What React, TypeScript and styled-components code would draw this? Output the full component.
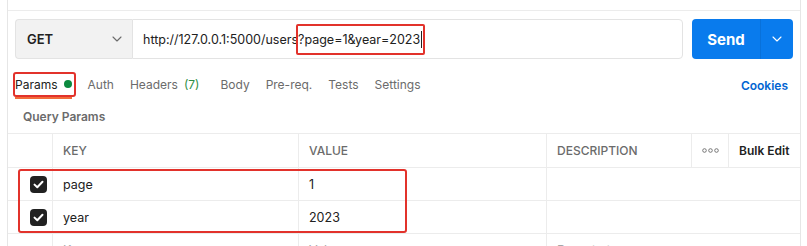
import * as React from "react";
import styled, { createGlobalStyle } from "styled-components";

const GlobalStyle = createGlobalStyle`
  html, body {
    margin: 0;
    padding: 0;
    background: #fff;
    overflow: hidden;
  }
  body {
    font-family: Inter, "Liberation Sans", sans-serif;
    color: #212121;
  }
`;

const Frame = styled.div`
  box-sizing: border-box;
  margin-left: 7px;
  width: 794px;
  height: 246px;
  overflow: hidden;
  padding-top: 10px;
  border-left: 1px solid #e6e6e6;
  border-right: 1px solid #e6e6e6;
`;

const Pane = styled.div`
  border-top: 1px solid #ececec;
`;

/* request bar */
const RequestBar = styled.div`
  display: flex;
  gap: 9px;
  padding: 8px 7px 0 7px;
  height: 40px;
`;

const UrlGroup = styled.div`
  flex: 1;
  display: flex;
`;

const MethodSelect = styled.div`
  box-sizing: border-box;
  width: 117px;
  display: flex;
  align-items: center;
  justify-content: space-between;
  padding: 0 10px 0 11px;
  background: #f2f2f2;
  border: 1px solid #e3e3e3;
  border-right: none;
  border-radius: 4px 0 0 4px;
  font-size: 13px;
  font-weight: 600;
  color: #212121;
`;

const UrlInput = styled.div`
  flex: 1;
  display: flex;
  align-items: center;
  padding-left: 10px;
  border: 1px solid #e3e3e3;
  border-radius: 0 4px 4px 0;
  font-size: 12.5px;
  color: #212121;
  white-space: nowrap;
`;

const QueryMark = styled.span`
  position: relative;
  display: inline-flex;
  align-items: center;
  &::after {
    content: "";
    position: absolute;
    left: -2px;
    right: -3px;
    top: -7px;
    bottom: -7px;
    border: 2px solid #e2322b;
    border-radius: 2px;
  }
`;

const Caret = styled.span`
  display: inline-block;
  width: 1px;
  height: 17px;
  margin-left: 1px;
  background: #212121;
`;

const SendButton = styled.div`
  width: 101px;
  display: flex;
  background: #097bed;
  border-radius: 4px;
  color: #fff;
`;

const SendLabel = styled.div`
  width: 68px;
  display: flex;
  align-items: center;
  justify-content: center;
  font-size: 15px;
  font-weight: 700;
`;

const SendArrow = styled.div`
  flex: 1;
  display: flex;
  align-items: center;
  justify-content: center;
  border-left: 1px solid rgba(0, 0, 0, 0.08);
`;

/* tabs */
const TabsRow = styled.div`
  display: flex;
  margin-top: 12px;
  height: 28px;
  padding: 0 12px 0 7px;
  font-size: 12px;
`;

const Tab = styled.div<{ $active?: boolean }>`
  display: flex;
  align-items: center;
  margin-right: 16px;
  color: ${(p) => (p.$active ? "#212121" : "#6b6b6b")};
  border-bottom: 2px solid ${(p) => (p.$active ? "#f26b3a" : "transparent")};
`;

const TabLabel = styled.span`
  position: relative;
  display: inline-flex;
  align-items: center;
  gap: 6px;
  &::after {
    content: "";
    position: absolute;
    left: -2px;
    right: -4px;
    top: -5px;
    bottom: -5px;
    border: 2px solid #e2322b;
    border-radius: 3px;
  }
`;

const Dot = styled.span`
  width: 8px;
  height: 8px;
  border-radius: 50%;
  background: #0b8a3f;
`;

const Count = styled.span`
  color: #2f8f46;
  margin: 0 5px 0 6px;
`;

const CookiesLink = styled.div`
  margin-left: auto;
  display: flex;
  align-items: center;
  color: #0265d2;
  font-weight: 600;
`;

const SectionTitle = styled.div`
  height: 34px;
  display: flex;
  align-items: center;
  padding-left: 15px;
  font-size: 12px;
  font-weight: 600;
  color: #6b6b6b;
`;

/* table */
const Table = styled.div`
  border-top: 1px solid #ececec;
`;

const Row = styled.div<{ $head?: boolean }>`
  display: grid;
  grid-template-columns: 44px 246px 248px 145px 37px 1fr;
  height: ${(p) => (p.$head ? 33 : 32)}px;
  border-bottom: 1px solid #ececec;
`;

const Cell = styled.div<{ $span?: number; $first?: boolean; $muted?: boolean }>`
  display: flex;
  align-items: center;
  padding-left: 10px;
  grid-column: span ${(p) => p.$span ?? 1};
  border-left: ${(p) => (p.$first ? "none" : "1px solid #ececec")};
  font-size: 12.5px;
  color: ${(p) => (p.$muted ? "#a6a6a6" : "#212121")};
  white-space: nowrap;
  overflow: hidden;
`;

const HeadCell = styled(Cell)`
  font-size: 12px;
  font-weight: 500;
  color: #6b6b6b;
`;

const CheckCell = styled.div`
  display: flex;
  align-items: center;
  justify-content: flex-end;
  padding-right: 5px;
`;

const Checkbox = styled.span`
  width: 17px;
  height: 17px;
  border-radius: 4px;
  background: #212121;
  display: flex;
  align-items: center;
  justify-content: center;
`;

const MenuCell = styled(Cell)`
  justify-content: center;
  padding-left: 0;
  color: #6b6b6b;
`;

const BulkEdit = styled(Cell)`
  font-size: 12px;
  font-weight: 600;
  color: #212121;
`;

const Body = styled.div`
  position: relative;
`;

const RowsMark = styled.div`
  position: absolute;
  left: 10px;
  top: 1px;
  width: 389px;
  height: 64px;
  box-sizing: border-box;
  border: 2px solid #e2322b;
  border-radius: 3px;
  pointer-events: none;
`;

const Chevron: React.FC<{ color: string }> = ({ color }) => (
  <svg width="10" height="6" viewBox="0 0 10 6">
    <path d="M1 1l4 4 4-4" fill="none" stroke={color} strokeWidth="1.1" strokeLinecap="round" strokeLinejoin="round" />
  </svg>
);

const Tick = () => (
  <svg width="11" height="9" viewBox="0 0 11 9">
    <path d="M1.5 4.6l2.8 2.7L9.5 1.8" fill="none" stroke="#fff" strokeWidth="2" strokeLinecap="round" strokeLinejoin="round" />
  </svg>
);

const Dots = () => (
  <svg width="17" height="5" viewBox="0 0 17 5">
    {[2.5, 8.5, 14.5].map((cx) => (
      <circle key={cx} cx={cx} cy="2.5" r="1.8" fill="none" stroke="#6b6b6b" strokeWidth="0.9" />
    ))}
  </svg>
);

const params = [
  { key: "page", value: "1" },
  { key: "year", value: "2023" },
];

const tabs = ["Auth", "Headers", "Body", "Pre-req.", "Tests", "Settings"];

export default function App() {
  return (
    <>
      <GlobalStyle />
      <Frame>
        <Pane>
          <RequestBar>
            <UrlGroup>
              <MethodSelect>
                GET
                <Chevron color="#6b6b6b" />
              </MethodSelect>
              <UrlInput>
                http://127.0.0.1:5000/users
                <QueryMark>
                  ?page=1&amp;year=2023
                  <Caret />
                </QueryMark>
              </UrlInput>
            </UrlGroup>
            <SendButton>
              <SendLabel>Send</SendLabel>
              <SendArrow>
                <Chevron color="#ffffff" />
              </SendArrow>
            </SendButton>
          </RequestBar>

          <TabsRow>
            <Tab $active>
              <TabLabel>
                Params
                <Dot />
              </TabLabel>
            </Tab>
            {tabs.map((t) => (
              <Tab key={t}>
                {t}
                {t === "Headers" && <Count>(7)</Count>}
              </Tab>
            ))}
            <CookiesLink>Cookies</CookiesLink>
          </TabsRow>

          <SectionTitle>Query Params</SectionTitle>

          <Table>
            <Row $head>
              <CheckCell />
              <HeadCell>KEY</HeadCell>
              <HeadCell>VALUE</HeadCell>
              <HeadCell>DESCRIPTION</HeadCell>
              <MenuCell>
                <Dots />
              </MenuCell>
              <BulkEdit>Bulk Edit</BulkEdit>
            </Row>
            <Body>
              {params.map((p) => (
                <Row key={p.key}>
                  <CheckCell>
                    <Checkbox>
                      <Tick />
                    </Checkbox>
                  </CheckCell>
                  <Cell>{p.key}</Cell>
                  <Cell>{p.value}</Cell>
                  <Cell $span={3} />
                </Row>
              ))}
              <Row>
                <CheckCell />
                <Cell $muted>Key</Cell>
                <Cell $muted>Value</Cell>
                <Cell $span={3} $muted>
                  Description
                </Cell>
              </Row>
              <RowsMark />
            </Body>
          </Table>
        </Pane>
      </Frame>
    </>
  );
}
